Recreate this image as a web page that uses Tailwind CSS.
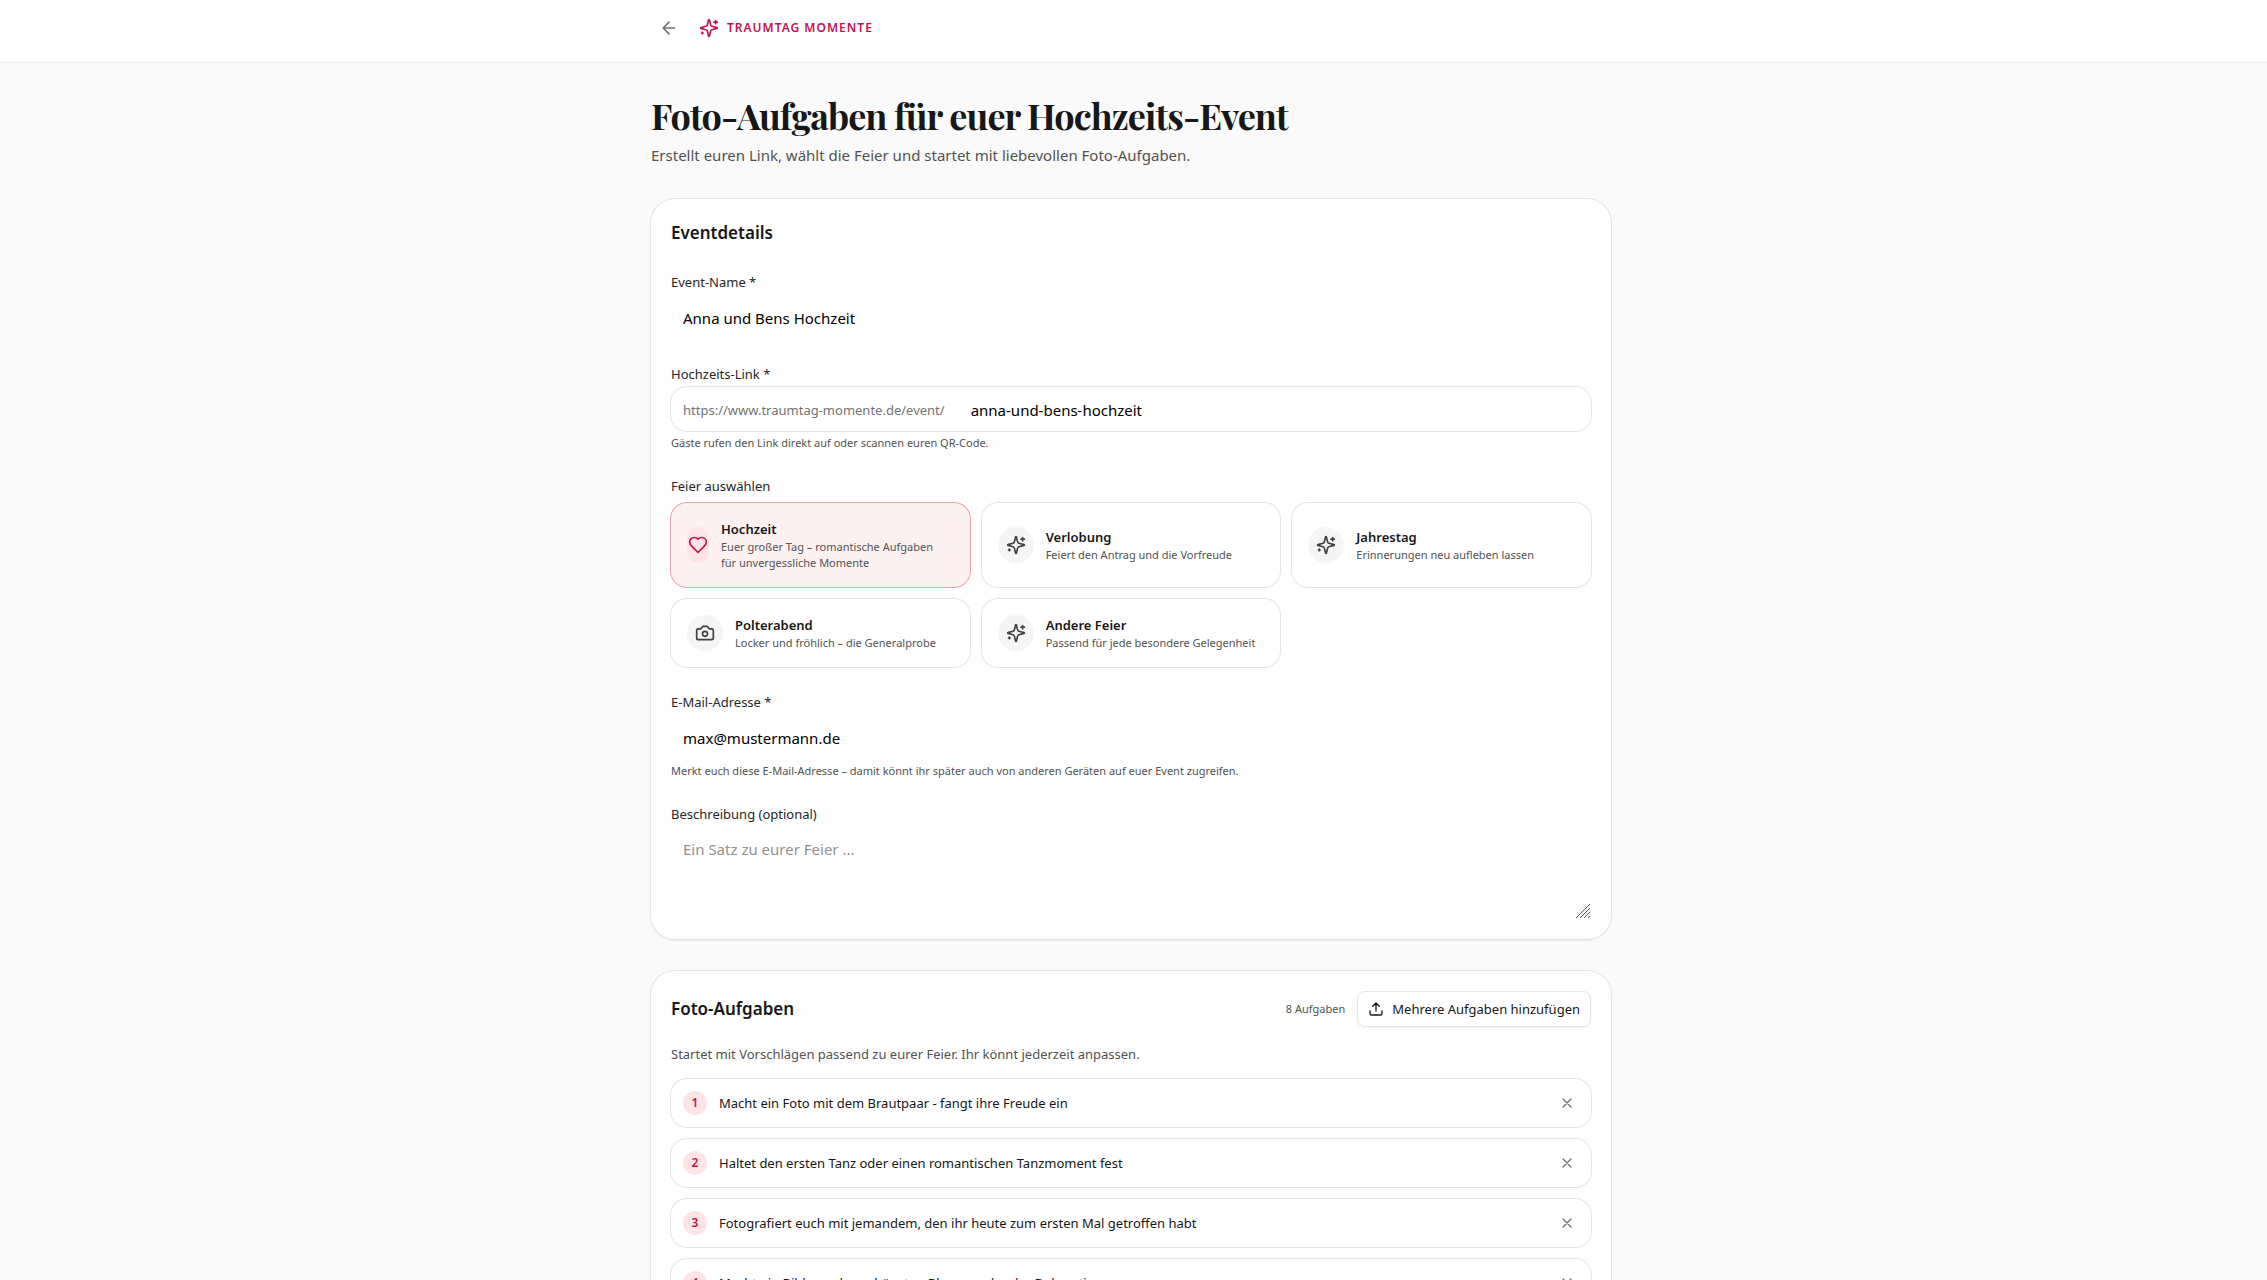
<!DOCTYPE html>
<html lang="de">
<head>
  <meta charset="UTF-8">
  <title>Traumtag Momente – Foto-Aufgaben</title>
  <meta name="viewport" content="width=device-width, initial-scale=1.0">
  <script src="https://cdn.jsdelivr.net/npm/@tailwindcss/browser@4"></script>
</head>
<body class="bg-neutral-50 pr-[5px] font-['Noto_Sans',sans-serif] text-[13px] leading-5 text-neutral-900">
  <!-- Icons -->
  <svg class="hidden">
    <symbol id="icon-sparkles" viewBox="0 0 24 24">
      <path d="M9.937 15.5A2 2 0 0 0 8.5 14.063l-6.135-1.582a.5.5 0 0 1 0-.962L8.5 9.936A2 2 0 0 0 9.937 8.5l1.582-6.135a.5.5 0 0 1 .963 0L14.063 8.5A2 2 0 0 0 15.5 9.937l6.135 1.581a.5.5 0 0 1 0 .964L15.5 14.063a2 2 0 0 0-1.437 1.437l-1.582 6.135a.5.5 0 0 1-.963 0z"/>
      <path d="M20 3v4M22 5h-4M4 17v2M5 18H3"/>
    </symbol>
    <symbol id="icon-heart" viewBox="0 0 24 24">
      <path d="M19 14c1.49-1.46 3-3.21 3-5.5A5.5 5.5 0 0 0 16.5 3c-1.76 0-3 .5-4.5 2-1.5-1.5-2.74-2-4.5-2A5.5 5.5 0 0 0 2 8.5c0 2.3 1.5 4.05 3 5.5l7 7Z"/>
    </symbol>
    <symbol id="icon-camera" viewBox="0 0 24 24">
      <path d="M14.5 4h-5L7 7H4a2 2 0 0 0-2 2v9a2 2 0 0 0 2 2h16a2 2 0 0 0 2-2V9a2 2 0 0 0-2-2h-3l-2.5-3z"/>
      <circle cx="12" cy="13" r="3"/>
    </symbol>
    <symbol id="icon-x" viewBox="0 0 24 24">
      <path d="M18 6 6 18M6 6l12 12"/>
    </symbol>
  </svg>

  <div class="-mr-[5px] border-b border-neutral-200/70 bg-white pr-[5px]">
    <header class="mx-auto flex max-w-[960px] items-center gap-3 pt-[10px] pb-4">
      <button type="button" aria-label="Zurück" class="flex size-9 items-center justify-center rounded-full text-neutral-500">
        <svg class="size-5" viewBox="0 0 24 24" fill="none" stroke="currentColor" stroke-width="2" stroke-linecap="round" stroke-linejoin="round"><path d="m12 19-7-7 7-7M19 12H5"/></svg>
      </button>
      <a href="#" class="flex items-center gap-2 text-[12px] font-semibold tracking-[1px] text-[#c4124f]">
        <svg class="size-5" fill="none" stroke="currentColor" stroke-width="2" stroke-linecap="round" stroke-linejoin="round"><use href="#icon-sparkles"/></svg>
        TRAUMTAG MOMENTE
      </a>
    </header>
  </div>

  <main class="mx-auto max-w-[960px] py-8">
    <h1 class="font-['Playfair_Display',serif] text-4xl font-bold tracking-tight">Foto-Aufgaben für euer Hochzeits-Event</h1>
    <p class="mt-2 text-[15px] leading-6 text-neutral-600">Erstellt euren Link, wählt die Feier und startet mit liebevollen Foto-Aufgaben.</p>

    <form class="mt-8 space-y-8">
      <section class="space-y-6 rounded-3xl bg-[#fefefe] p-5 shadow-sm ring-1 ring-neutral-200">
        <h2 class="text-[17px] leading-7 font-semibold">Eventdetails</h2>

        <div>
          <label for="name" class="block leading-[22px] text-neutral-800">Event-Name *</label>
          <input id="name" type="text" value="Anna und Bens Hochzeit" class="mt-0.5 block h-11 w-full rounded-xl bg-white px-3 pt-0.5 text-[15px] text-black outline-none">
        </div>

        <div>
          <label for="link" class="block leading-[22px] text-neutral-800">Hochzeits-Link *</label>
          <div class="mt-0.5 flex h-11 items-center rounded-2xl bg-white px-3 pt-0.5 ring-1 ring-neutral-200">
            <span class="text-neutral-500">https://www.traumtag-momente.de/event/</span>
            <input id="link" type="text" value="anna-und-bens-hochzeit" class="ml-3.5 min-w-0 flex-1 px-3 text-[15px] text-black outline-none">
          </div>
          <p class="mt-1 text-[11px] leading-4 text-neutral-600">Gäste rufen den Link direkt auf oder scannen euren QR-Code.</p>
        </div>

        <div>
          <p class="leading-[22px] text-neutral-800">Feier auswählen</p>
          <div class="mt-1.5 grid grid-cols-3 gap-3">
            <button type="button" class="flex items-center gap-3 rounded-2xl bg-[#fef1f2] p-4 text-left ring-1 ring-[#eda3ae]">
              <span class="flex h-9 w-[22px] shrink-0 items-center justify-center rounded-full bg-rose-100 text-[#c4124f]">
                <svg class="size-5 shrink-0" fill="none" stroke="currentColor" stroke-width="2" stroke-linecap="round" stroke-linejoin="round"><use href="#icon-heart"/></svg>
              </span>
              <span>
                <span class="block font-semibold">Hochzeit</span>
                <span class="block text-[11px] leading-4 text-neutral-600">Euer großer Tag – romantische Aufgaben<br>für unvergessliche Momente</span>
              </span>
            </button>
            <button type="button" class="flex items-center gap-3 rounded-2xl bg-white p-4 text-left ring-1 ring-neutral-200">
              <span class="flex size-9 shrink-0 items-center justify-center rounded-full bg-neutral-100 text-neutral-700">
                <svg class="size-5" fill="none" stroke="currentColor" stroke-width="2" stroke-linecap="round" stroke-linejoin="round"><use href="#icon-sparkles"/></svg>
              </span>
              <span>
                <span class="block font-semibold">Verlobung</span>
                <span class="block text-[11px] leading-4 text-neutral-600">Feiert den Antrag und die Vorfreude</span>
              </span>
            </button>
            <button type="button" class="flex items-center gap-3 rounded-2xl bg-white p-4 text-left ring-1 ring-neutral-200">
              <span class="flex size-9 shrink-0 items-center justify-center rounded-full bg-neutral-100 text-neutral-700">
                <svg class="size-5" fill="none" stroke="currentColor" stroke-width="2" stroke-linecap="round" stroke-linejoin="round"><use href="#icon-sparkles"/></svg>
              </span>
              <span>
                <span class="block font-semibold">Jahrestag</span>
                <span class="block text-[11px] leading-4 text-neutral-600">Erinnerungen neu aufleben lassen</span>
              </span>
            </button>
            <button type="button" class="flex items-center gap-3 rounded-2xl bg-white p-4 text-left ring-1 ring-neutral-200">
              <span class="flex size-9 shrink-0 items-center justify-center rounded-full bg-neutral-100 text-neutral-700">
                <svg class="size-5" fill="none" stroke="currentColor" stroke-width="2" stroke-linecap="round" stroke-linejoin="round"><use href="#icon-camera"/></svg>
              </span>
              <span>
                <span class="block font-semibold">Polterabend</span>
                <span class="block text-[11px] leading-4 text-neutral-600">Locker und fröhlich – die Generalprobe</span>
              </span>
            </button>
            <button type="button" class="flex items-center gap-3 rounded-2xl bg-white p-4 text-left ring-1 ring-neutral-200">
              <span class="flex size-9 shrink-0 items-center justify-center rounded-full bg-neutral-100 text-neutral-700">
                <svg class="size-5" fill="none" stroke="currentColor" stroke-width="2" stroke-linecap="round" stroke-linejoin="round"><use href="#icon-sparkles"/></svg>
              </span>
              <span>
                <span class="block font-semibold">Andere Feier</span>
                <span class="block text-[11px] leading-4 text-neutral-600">Passend für jede besondere Gelegenheit</span>
              </span>
            </button>
          </div>
        </div>

        <div>
          <label for="email" class="block leading-[22px] text-neutral-800">E-Mail-Adresse *</label>
          <input id="email" type="email" value="max@mustermann.de" class="mt-0.5 block h-11 w-full rounded-xl bg-white px-3 pt-0.5 text-[15px] text-black outline-none">
          <p class="mt-1 text-[11px] leading-4 text-neutral-600">Merkt euch diese E-Mail-Adresse – damit könnt ihr später auch von anderen Geräten auf euer Event zugreifen.</p>
        </div>

        <div>
          <label for="description" class="block leading-[22px] text-neutral-800">Beschreibung (optional)</label>
          <div class="relative mt-0.5">
            <textarea id="description" placeholder="Ein Satz zu eurer Feier ..." class="block h-[92px] w-full resize-none rounded-xl bg-white px-3 py-2.5 text-[15px] leading-6 outline-none placeholder:text-neutral-500/80"></textarea>
            <svg class="pointer-events-none absolute right-0 bottom-0 size-4 text-neutral-600" viewBox="0 0 16 16" fill="none" stroke="currentColor"><path d="M1 15 15 1M5 15 15 5M9 15l6-6M13 15l2-2"/></svg>
          </div>
        </div>
      </section>

      <section class="rounded-3xl bg-[#fefefe] p-5 shadow-sm ring-1 ring-neutral-200">
        <div class="flex items-center gap-3">
          <h2 class="flex-1 text-[17px] leading-7 font-semibold">Foto-Aufgaben</h2>
          <span class="text-[11px] text-neutral-600">8 Aufgaben</span>
          <button type="button" class="flex h-9 items-center gap-2 rounded-lg border border-neutral-200 bg-white px-[10px] shadow-xs">
            <svg class="size-4" viewBox="0 0 24 24" fill="none" stroke="currentColor" stroke-width="2" stroke-linecap="round" stroke-linejoin="round"><path d="M21 15v4a2 2 0 0 1-2 2H5a2 2 0 0 1-2-2v-4M17 8l-5-5-5 5M12 3v12"/></svg>
            Mehrere Aufgaben hinzufügen
          </button>
        </div>
        <p class="mt-4 leading-[22px] text-neutral-600">Startet mit Vorschlägen passend zu eurer Feier. Ihr könnt jederzeit anpassen.</p>
        <ol id="taskList" class="mt-3.5 space-y-3"></ol>
      </section>
    </form>
  </main>

  <template id="taskTemplate">
    <li class="flex h-12 items-center gap-3 rounded-2xl bg-white px-3 ring-1 ring-neutral-200">
      <span class="task-number flex size-6 items-center justify-center rounded-full bg-rose-100 text-[12px] font-semibold text-[#c4124f]"></span>
      <span class="task-text flex-1"></span>
      <button type="button" aria-label="Aufgabe entfernen" class="flex size-6 items-center justify-center text-neutral-500">
        <svg class="size-4" fill="none" stroke="currentColor" stroke-width="2" stroke-linecap="round" stroke-linejoin="round"><use href="#icon-x"/></svg>
      </button>
    </li>
  </template>

  <script>
    const tasks = [
      'Macht ein Foto mit dem Brautpaar - fangt ihre Freude ein',
      'Haltet den ersten Tanz oder einen romantischen Tanzmoment fest',
      'Fotografiert euch mit jemandem, den ihr heute zum ersten Mal getroffen habt',
      'Macht ein Bild von den schönsten Blumen oder der Dekoration'
    ];

    const taskList = document.getElementById('taskList');

    tasks.forEach((task, index) => {
      const item = document.getElementById('taskTemplate').content.cloneNode(true);
      item.querySelector('.task-number').textContent = index + 1;
      item.querySelector('.task-text').textContent = task;
      item.querySelector('button').onclick = e => e.currentTarget.closest('li').remove();
      taskList.appendChild(item);
    });
  </script>
</body>
</html>
